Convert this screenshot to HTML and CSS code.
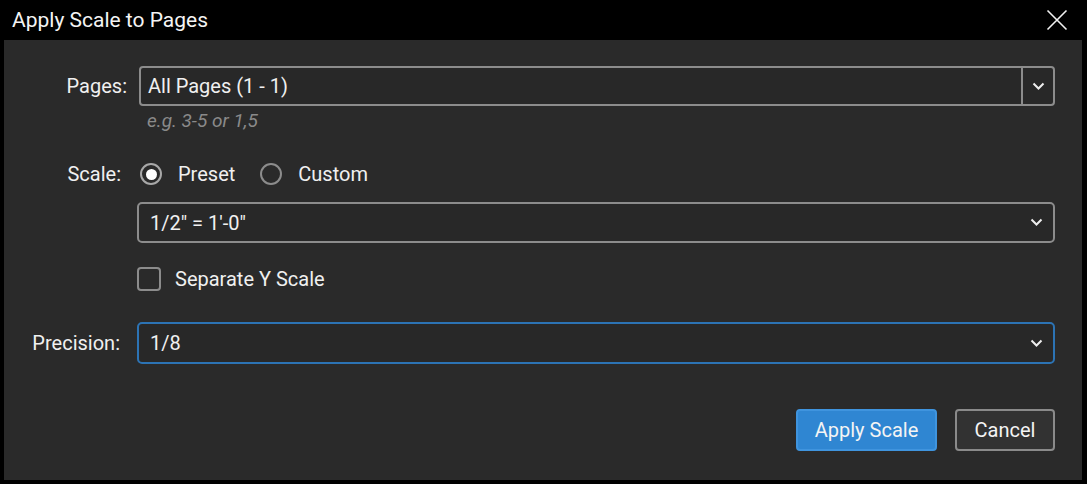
FILE: index.html
```html
<!DOCTYPE html>
<html>
<head>
<meta charset="utf-8">
<link rel="stylesheet" href="styles.css">
</head>
<body>
<div class="window">
  <div class="titlebar">
    <span class="title">Apply Scale to Pages</span>
    <svg class="close" width="22" height="22" viewBox="0 0 22 22"><path d="M1.5 1.5 L20.5 20.5 M20.5 1.5 L1.5 20.5" stroke="#f2f2f2" stroke-width="1.6" fill="none"/></svg>
  </div>
  <div class="panel">
    <div class="row row-pages">
      <label class="label label-pages">Pages:</label>
      <div class="combo">
        <span class="combo-text">All Pages (1 - 1)</span>
        <span class="combo-btn">
          <svg width="13" height="9" viewBox="0 0 13 9"><path d="M1.5 1.5 L6.5 6.5 L11.5 1.5" stroke="#eee" stroke-width="2" fill="none"/></svg>
        </span>
      </div>
    </div>
    <div class="hint">e.g. 3-5 or 1,5</div>
    <div class="row row-scale">
      <label class="label">Scale:</label>
      <div class="radios">
        <span class="radio checked"><span class="dot"></span></span>
        <span class="opt">Preset</span>
        <span class="radio"></span>
        <span class="opt">Custom</span>
      </div>
    </div>
    <div class="row row-select1">
      <span class="label"></span>
      <div class="select">
        <span class="select-text">1/2" = 1'-0"</span>
        <svg width="13" height="9" viewBox="0 0 13 9"><path d="M1.5 1.5 L6.5 6.5 L11.5 1.5" stroke="#eee" stroke-width="2" fill="none"/></svg>
      </div>
    </div>
    <div class="row row-check">
      <span class="label"></span>
      <span class="checkbox"></span>
      <span class="opt">Separate Y Scale</span>
    </div>
    <div class="row row-precision">
      <label class="label">Precision:</label>
      <div class="select focus">
        <span class="select-text">1/8</span>
        <svg width="13" height="9" viewBox="0 0 13 9"><path d="M1.5 1.5 L6.5 6.5 L11.5 1.5" stroke="#eee" stroke-width="2" fill="none"/></svg>
      </div>
    </div>
    <div class="buttons">
      <button class="btn primary">Apply Scale</button>
      <button class="btn">Cancel</button>
    </div>
  </div>
</div>
</body>
</html>
```
FILE: styles.css
```css
* { box-sizing: border-box; }
html, body { margin: 0; padding: 0; background: #000; }
body { font-family: Roboto, "Liberation Sans", sans-serif; color: #f0f0f0; }
.window { width: 1087px; height: 484px; background: #000; display: flex; flex-direction: column; }
.titlebar { height: 40px; display: flex; align-items: center; justify-content: space-between; padding: 0 19px 0 12px; }
.title { font-size: 21px; color: #f4f4f4; letter-spacing: 0; }
.close { display: block; }
.panel { margin: 0 5px 4px 4px; height: 440px; background: #2a2a2a; padding: 26px 27px 0 0; display: flex; flex-direction: column; }
.row { display: flex; align-items: center; }
.label { width: 133px; flex: none; text-align: right; padding-right: 13px; font-size: 20px; color: #f0f0f0; }
.label-pages { padding-right: 12px; width: 135px; }
.row-pages { height: 40px; }
.combo { flex: 1; height: 40px; border: 2px solid #8c8c8c; border-radius: 4px; background: #282828; display: flex; align-items: center; }
.combo-text { flex: 1; padding-left: 7px; font-size: 20px; }
.combo-btn { width: 32px; height: 100%; border-left: 2px solid #8c8c8c; display: flex; align-items: center; justify-content: center; }
.combo-btn svg, .select svg { display: block; }
.hint { margin: 5px 0 0 143px; height: 20px; line-height: 20px; font-size: 19px; font-style: italic; color: #8a8a8a; }
.row-scale { margin-top: 31px; height: 24px; }
.row-scale .label { width: 136px; padding-right: 19px; }
.radios { display: flex; align-items: center; }
.radio { width: 22px; height: 22px; border: 2px solid #8c8c8c; border-radius: 50%; display: flex; align-items: center; justify-content: center; flex: none; }
.radio.checked { border-color: #a8a8a8; }
.dot { width: 11px; height: 11px; border-radius: 50%; background: #fff; }
.opt { font-size: 20px; color: #f0f0f0; margin-left: 16px; margin-right: 25px; }
.row-select1 { margin-top: 16px; }
.select { flex: 1; height: 41px; border: 2px solid #8c8c8c; border-radius: 5px; background: #282828; display: flex; align-items: center; justify-content: space-between; padding: 0 10px 0 11px; }
.select.focus { height: 42px; border-color: #2c73b4; }
.select-text { font-size: 20px; }
.row-check { margin-top: 24px; height: 24px; }
.row-check .label { width: 133px; }
.checkbox { width: 24px; height: 24px; border: 2px solid #8c8c8c; border-radius: 4px; flex: none; }
.row-check .opt { margin-left: 14px; }
.row-precision { margin-top: 31px; }
.row-precision .label { width: 133px; padding-right: 17px; }
.buttons { margin-top: 45px; display: flex; justify-content: flex-end; gap: 18px; }
.btn { height: 42px; font-family: Roboto, "Liberation Sans", sans-serif; font-size: 20px; color: #f4f4f4; border-radius: 4px; background: #323232; border: 2px solid #8a8a8a; padding: 0; }
.btn.primary { background: #2f86d2; border-color: #3f94de; width: 141px; }
.btn:not(.primary) { width: 100px; }
```
